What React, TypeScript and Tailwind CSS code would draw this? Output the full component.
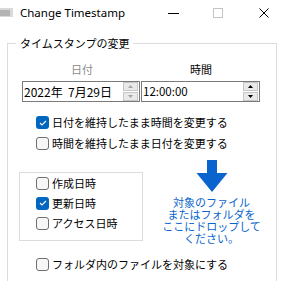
import React from "react";

const Spin = ({ disabled }: { disabled?: boolean }) => {
  const c = disabled ? "#a6a6a6" : "#000000";
  return (
    <div className="flex w-[15px] flex-col gap-[1px]">
      <div className="flex h-[9px] items-center justify-center border border-[#c6c6c6] bg-[#e9e9e9]">
        <svg width="5" height="3" viewBox="0 0 5 3">
          <path d="M0 3 L2.5 0 L5 3 Z" fill={c} />
        </svg>
      </div>
      <div className="flex h-[9px] items-center justify-center border border-[#c6c6c6] bg-[#e9e9e9]">
        <svg width="5" height="3" viewBox="0 0 5 3">
          <path d="M0 0 L2.5 3 L5 0 Z" fill={c} />
        </svg>
      </div>
    </div>
  );
};

const Check = ({
  checked,
  label,
  row = "h-[21px]",
}: {
  checked?: boolean;
  label: string;
  row?: string;
}) => (
  <div className={`flex items-center ${row}`}>
    {checked ? (
      <span className="flex h-[13px] w-[13px] items-center justify-center rounded-[3px] bg-[#0067c0]">
        <svg width="8" height="6" viewBox="0 0 8 6">
          <path d="M1 3 L3 5 L7 1" stroke="white" strokeWidth="1.1" fill="none" />
        </svg>
      </span>
    ) : (
      <span className="h-[13px] w-[13px] rounded-[3px] border border-[#707070] bg-[#f7f7f7]" />
    )}
    <span className="ml-[3px] text-[11px] leading-none text-black">{label}</span>
  </div>
);

const App = () => {
  return (
    <div className="h-[281px] w-[281px] overflow-hidden bg-white font-['Noto_Sans_CJK_JP',sans-serif] text-black">
      {/* title bar */}
      <div className="flex h-[26px] items-center">
        <svg width="14" height="9" viewBox="0 0 14 9" className="mt-[-1px]">
          <rect x="0" y="0" width="13" height="9" fill="#d9d9d9" />
          <rect x="0" y="2" width="10" height="6" fill="#b3b3b3" />
        </svg>
        <span className="ml-[6px] font-['Noto_Sans',sans-serif] text-[11.5px]">Change Timestamp</span>
        <div className="flex-1" />
        <span className="h-[1px] w-[11px] bg-black" />
        <span className="ml-[34px] h-[10px] w-[10px] border border-[#c4c4c4]" />
        <svg width="10" height="10" viewBox="0 0 10 10" className="ml-[36px] mr-[12px]">
          <path d="M0.5 0.5 L9.5 9.5 M9.5 0.5 L0.5 9.5" stroke="#000" strokeWidth="1" />
        </svg>
      </div>

      <fieldset className="ml-[7px] mt-[9px] h-[300px] w-[270px] border border-[#dcdcdc] pl-[8px]">
        <legend className="px-[4px] text-[11px] leading-[16px]">タイムスタンプの変更</legend>

        <div className="ml-[6px] mt-[10px] flex text-[11px] leading-[16px]">
          <div className="w-[120px] text-center text-[#8c8c8c]">日付</div>
          <div className="w-[118px] text-center">時間</div>
        </div>

        <div className="ml-[6px] mt-[4px] flex gap-[1px]">
          <div className="flex h-[21px] w-[118px] items-center border border-[#7a7a7a] pl-[1px] pr-[1px]">
            <span className="flex-1 text-[12px] leading-none">2022年&nbsp;&nbsp;7月29日</span>
            <Spin disabled />
          </div>
          <div className="flex h-[21px] w-[119px] items-center border border-[#7a7a7a] pl-[1px] pr-[1px]">
            <span className="flex-1 text-[11.5px] leading-none">12:00:00</span>
            <Spin />
          </div>
        </div>

        <div className="ml-[20px] mt-[10px]">
          <Check checked label="日付を維持したまま時間を変更する" />
          <Check label="時間を維持したまま日付を変更する" />
        </div>

        <div className="mt-[6px] flex items-start">
          <div className="ml-[3px] mt-[12px] h-[69px] w-[124px] border border-[#dcdcdc] pl-[16px]">
            <Check label="作成日時" row="h-[20px]" />
            <Check checked label="更新日時" row="h-[20px]" />
            <Check label="アクセス日時" row="h-[20px]" />
          </div>
          <div className="flex flex-1 flex-col items-center pl-[4px]">
            <svg width="32" height="32" viewBox="0 0 32 32">
              <path d="M11 0 H21 V13 H31.5 L16 32 L0.5 13 H11 Z" fill="#0a64cd" />
            </svg>
            <div className="mt-[4px] text-center text-[11px] leading-[12px] text-[#0a64cd]">
              対象のファイル
              <br />
              またはフォルダを
              <br />
              ここにドロップして
              <br />
              ください。
            </div>
          </div>
        </div>

        <div className="ml-[20px] mt-[10px]">
          <Check label="フォルダ内のファイルを対象にする" />
        </div>
      </fieldset>
    </div>
  );
};

export default App;
